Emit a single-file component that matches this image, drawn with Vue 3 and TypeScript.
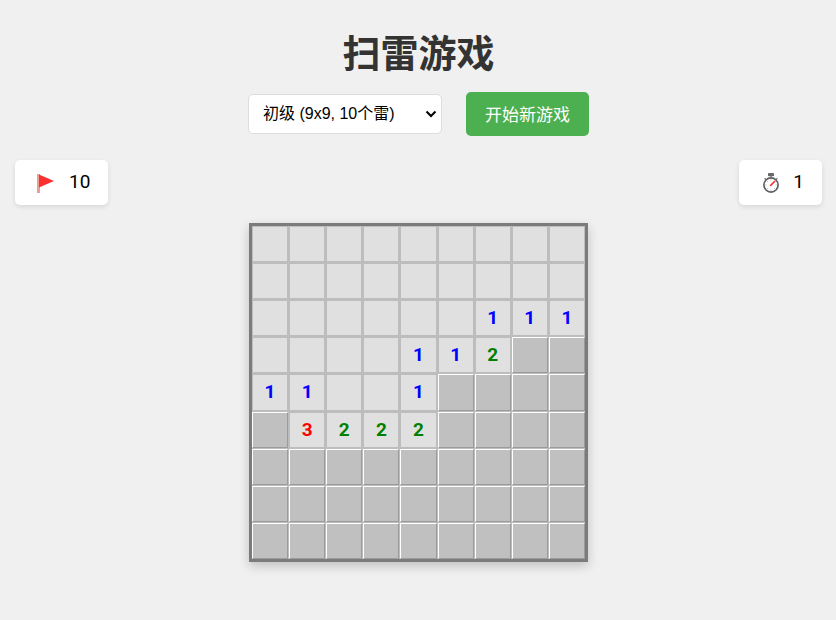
<script setup lang="ts">
import { ref } from 'vue'

interface Cell {
  id: number
  open: boolean
  count: number
}

const levels = [
  { value: 'easy', label: '初级 (9x9, 10个雷)' },
  { value: 'medium', label: '中级 (16x16, 40个雷)' },
  { value: 'hard', label: '高级 (16x30, 99个雷)' },
]

// '#' is a covered cell, '.' an open blank cell, a digit an open cell with its mine count
const start = [
  '.........',
  '.........',
  '......111',
  '....112##',
  '11..1####',
  '#3222####',
  '#########',
  '#########',
  '#########',
]

const level = ref('easy')
const mines = ref(10)
const seconds = ref(1)

const deal = (rows: string[]): Cell[] =>
  rows
    .join('')
    .split('')
    .map((c, id) => ({ id, open: c !== '#', count: Number(c) || 0 }))

const cells = ref<Cell[]>(deal(start))

function newGame(): void {
  cells.value = deal(Array<string>(9).fill('#########'))
  seconds.value = 0
}

function openCell(cell: Cell): void {
  cell.open = true
}
</script>

<template>
  <main class="game">
    <h1 class="title">扫雷游戏</h1>
    <div class="controls">
      <div class="level-box">
        <select v-model="level" class="level" aria-label="难度">
          <option v-for="l in levels" :key="l.value" :value="l.value">{{ l.label }}</option>
        </select>
        <svg class="chevron" viewBox="0 0 12 8" aria-hidden="true">
          <path d="M1.500 1.500 6 6 10.500 1.500" fill="none" stroke="#000" stroke-width="2" />
        </svg>
      </div>
      <button type="button" class="new-game" @click="newGame">开始新游戏</button>
    </div>
    <div class="stats">
      <div class="stat">
        <svg class="icon" viewBox="0 0 24 24" aria-hidden="true">
          <rect x="2" y="3" width="3" height="19" fill="#e8a090" />
          <path d="M4 3.500 19 10 4 16.500Z" fill="#fc3030" />
        </svg>
        <span class="value">{{ mines }}</span>
      </div>
      <div class="stat">
        <svg class="icon" viewBox="0 0 24 24" aria-hidden="true">
          <rect x="9" y="2" width="6" height="3.200" rx="0.800" fill="#686868" />
          <rect x="11" y="5" width="2" height="2" fill="#999" />
          <path d="M5.600 7.200 7 8.600M18.400 7.200 17 8.600" stroke="#888" stroke-width="1.600" />
          <circle cx="12" cy="14" r="7.100" fill="#fff" stroke="#606060" stroke-width="1.700" />
          <path
            d="M12 8.300v1.200M12 18.500v1.200M6.300 14h1.200M16.500 14h1.200M8 10l.8.8M8 18l.8-.8M16 18l-.8-.8"
            stroke="#aaa"
            stroke-width="0.800"
          />
          <path d="M11.200 14.800 16 10" stroke="#f83838" stroke-width="1.700" />
        </svg>
        <span class="value">{{ seconds }}</span>
      </div>
    </div>
    <div class="board">
      <button
        v-for="cell in cells"
        :key="cell.id"
        type="button"
        class="cell"
        :class="[{ open: cell.open }, cell.count ? 'n' + cell.count : '']"
        @click="openCell(cell)"
      >{{ cell.open && cell.count ? cell.count : '' }}</button>
    </div>
  </main>
</template>

<style>
body {
  background: #f0f0f0;
}
</style>

<style scoped>
.game {
  display: flex;
  flex-direction: column;
  align-items: center;
  padding: 26px 14px 24px 15px;
  font-family: "Liberation Sans", "Noto Sans CJK SC", sans-serif;
  color: #333;
}

.title {
  margin: 0 0 10px;
  font-size: 38px;
  line-height: 56px;
  font-weight: 700;
}

.controls {
  display: flex;
  align-items: center;
  gap: 24px;
}

.level-box {
  position: relative;
  display: flex;
}

.level {
  appearance: none;
  width: 194px;
  height: 40px;
  padding: 0 14px 2px;
  border: 1px solid #ddd;
  border-radius: 5px;
  background-color: #fff;
  color: #000;
  font-family: inherit;
  font-size: 16px;
}

.chevron {
  position: absolute;
  top: 16px;
  right: 5px;
  width: 12px;
  height: 8px;
  pointer-events: none;
}

.new-game {
  height: 44px;
  padding: 0 19px 2px;
  border: 0;
  border-radius: 5px;
  background: #4caf50;
  color: #fff;
  font-family: inherit;
  font-size: 17px;
  cursor: pointer;
}

.stats {
  align-self: stretch;
  display: flex;
  justify-content: space-between;
  margin: 24px 0 18px;
}

.stat {
  display: flex;
  align-items: center;
  gap: 10px;
  height: 45px;
  padding: 0 18px 0 20px;
  border-radius: 5px;
  background: #fff;
  box-shadow: 0 2px 5px rgba(0, 0, 0, 0.1);
  color: #000;
  font-family: Roboto, "Liberation Sans", sans-serif;
  font-size: 19px;
}

.value {
  padding-bottom: 2px;
}

.icon {
  width: 24px;
  height: 24px;
}

.board {
  box-sizing: border-box;
  display: grid;
  grid-template-columns: repeat(9, 1fr);
  grid-template-rows: repeat(9, 1fr);
  gap: 1px;
  width: 339px;
  aspect-ratio: 1;
  border: 3px solid #7b7b7b;
  background: #bdbdbd;
  box-shadow: 0 4px 10px rgba(0, 0, 0, 0.2);
}

.cell {
  min-width: 0;
  min-height: 0;
  padding: 0;
  border: 1px solid;
  border-color: #fff #9b9b9b #9b9b9b #fff;
  border-radius: 0;
  background: #c0c0c0;
  font-family: Roboto, "Liberation Sans", sans-serif;
  font-size: 19px;
  line-height: 22px;
  font-weight: 700;
  cursor: pointer;
}

.open {
  border-color: #bdbdbd;
  background: #e0e0e0;
}

.n1 {
  color: #0000ff;
}

.n2 {
  color: #008000;
}

.n3 {
  color: #ff0000;
}
</style>
